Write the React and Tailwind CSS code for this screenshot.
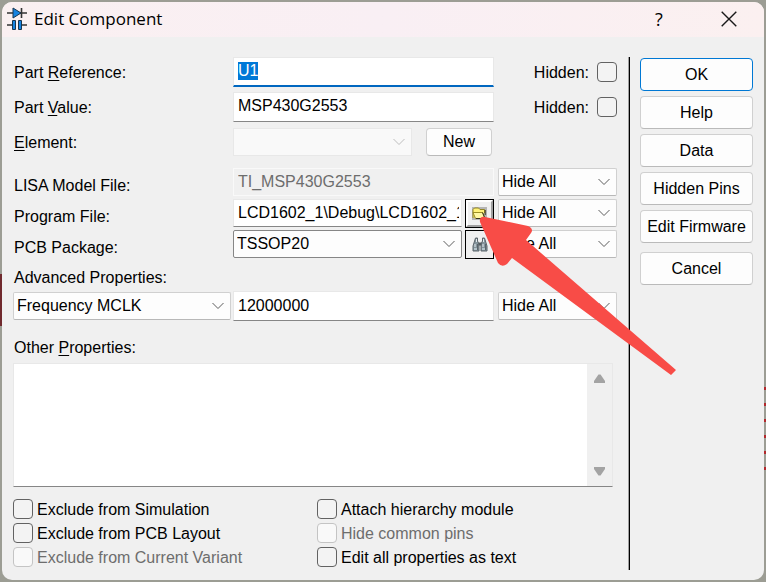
import { useEffect, useRef } from "react";

const Chevron = ({ className = "text-gray-600" }) => (
  <svg
    className={`pointer-events-none absolute right-[7px] top-2 h-3 w-3 ${className}`}
    viewBox="0 0 12 12"
    fill="none"
    stroke="currentColor"
  >
    <path d="M.5 3 6 8.500l5.500-5.500" />
  </svg>
);

const Select = ({ id, label, value, className = "", border = "border-[#d0d0d0] border-b-[#b8b8b8]", disabled }) => (
  <div className={`relative h-7 ${className}`}>
    <select
      id={id}
      aria-label={label}
      disabled={disabled}
      className={`h-7 w-full appearance-none border pl-[3px] pr-6 leading-5 outline-none ${border} ${
        disabled ? "bg-[#f9f9f9]" : "rounded-[2px] bg-[#fdfdfd]"
      }`}
    >
      <option>{value}</option>
    </select>
    <Chevron className={disabled ? "text-[#bdbdbd]" : "text-[#5c5c5c]"} />
  </div>
);

const Row = ({ id, label, labelClass = "pt-[2px] leading-6", children }) => (
  <div className="flex items-center">
    <label htmlFor={id} className={`w-[219px] shrink-0 ${labelClass}`}>
      {label}
    </label>
    {children}
  </div>
);

// File rows have their labels set towards the bottom edge
const FileRow = (props) => <Row labelClass="pt-2 leading-5" {...props} />;

const boxClass = (disabled) =>
  `h-5 w-5 shrink-0 appearance-none rounded-[4px] border ${
    disabled ? "border-[#c4c4c4] bg-[#f9f9f9]" : "border-[#626262] bg-[#f3f3f3]"
  }`;

const Hidden = ({ id }) => (
  <div className="ml-1 flex w-[119px] shrink-0 items-center justify-end gap-2">
    <label htmlFor={id} className="pt-[2px]">
      Hidden:
    </label>
    <input id={id} type="checkbox" className={boxClass(false)} />
  </div>
);

const Check = ({ label, disabled }) => (
  <label className={`flex h-6 items-center gap-1 ${disabled ? "text-[#6d6d6d]" : ""}`}>
    <input type="checkbox" disabled={disabled} className={boxClass(disabled)} />
    <span className="pt-[2px] leading-5">{label}</span>
  </label>
);

const SideButton = ({ children, className = "border-[#d0d0d0] border-b-[#bababa]" }) => (
  <button
    type="button"
    className={`h-[33px] w-full whitespace-nowrap rounded-[4px] border bg-[#fdfdfd] text-center ${className}`}
  >
    {children}
  </button>
);

const AppIcon = () => (
  <svg className="h-6 w-5" viewBox="0 0 20 24">
    <path d="M0 6h20M0 18h20" stroke="#333" strokeWidth="1.4" />
    <path d="M6 1v10l8-5z" fill="#1683e0" stroke="#18354f" />
    <path d="M14.5 1v10" stroke="#333" strokeWidth="1.6" />
    <path d="M8.5 17h3v2h-3z" fill="#f9f0f2" />
    <path d="M5.5 13.5h3v9h-3zM11.5 13.5h3v9h-3z" fill="#1683e0" stroke="#18354f" />
  </svg>
);

const FolderIcon = () => (
  <svg className="h-[13px] w-[15px]" viewBox="0 0 15 13">
    <path d="M0 0h15v13H0z" fill="#b5b5b5" />
    <path d="M1 11V2.5L2.5 1h4L8 2.5h4.5V6" fill="#fff27a" stroke="#918425" />
    <path d="M1 5.5h9.5l2.5 6H3.5z" fill="#fff8a4" stroke="#9b8e25" />
    <path d="M10.5 5.5 13 11.5H4M13.2 3v5" fill="none" stroke="#39351b" />
  </svg>
);

const BinocularsIcon = () => (
  <svg className="h-[15px] w-4" viewBox="0 0 16 15">
    <path d="M3.5 1h2v3L7 7v7H1V9zM12.5 1h-2v3L9 7v7h6V9z" fill="#84949c" stroke="#5b646a" />
    <path d="M6.5 5.5h3v3h-3z" fill="#555d61" />
    <path d="M4.5 2v3M3 7v3M11.5 2v3M11 7v3" stroke="#e1e9ed" />
    <path d="M2 11h4v2H2zM10 11h4v2h-4z" fill="#b4c4cb" />
    <path d="M5.5 7v6M13.5 7v6" stroke="#5b646a" />
  </svg>
);

const Pointer = () => (
  <svg
    className="pointer-events-none absolute left-0 top-0 z-10 h-[180px] w-[215px] max-w-none"
    viewBox="0 0 215 180"
  >
    <path
      d="M15 23Q14 17 20 18L63 27Q69 30 66 34L61 41 211 171 206 176 47 59 42 65Q37 69 33 64Z"
      fill="#f84c47"
    />
  </svg>
);

const editClass = "h-[30px] min-w-0 flex-1 border border-[#e8e8e8] bg-white px-1 leading-5 outline-none";

const App = () => {
  const reference = useRef(null);

  useEffect(() => {
    reference.current.focus();
    reference.current.select();
  }, []);

  return (
    <div className="relative min-h-screen bg-[#9c9d94] p-[2px] font-['Liberation_Sans',Arial,sans-serif] text-base text-black">
      {/* Schematic sheet behind the dialog */}
      <div className="absolute left-0 top-[274px] h-[52px] w-[2px] bg-[#702a2e]" />
      <div className="absolute right-0 top-[387px] h-[84px] w-[2px] bg-[repeating-linear-gradient(#b3282c_0_3px,#9c9d94_3px_16px)]" />

      <main className="relative flex min-h-[calc(100vh-4px)] flex-col overflow-hidden rounded-[10px] bg-[#f0f0f0]">
        {/* Title bar */}
        <header className="flex h-[35px] items-center bg-linear-to-r from-[#faf0f1] via-[#f9eff4] to-[#fbf0f0] pb-[2px] pl-[5px] pr-6">
          <AppIcon />
          <h1 className="ml-[7px] flex-1 font-['Open_Sans','Noto_Sans',sans-serif] text-[17px]">Edit Component</h1>
          <button type="button" aria-label="Help" className="w-6 font-['Open_Sans','Noto_Sans',sans-serif] text-lg">
            ?
          </button>
          <button type="button" aria-label="Close" className="ml-[47px] flex w-[22px] justify-center">
            <svg className="h-4 w-4" viewBox="0 0 16 16" stroke="#191919" strokeWidth="1.4">
              <path d="m.7.7 14.6 14.6m0-14.6L.7 15.3" />
            </svg>
          </button>
        </header>

        <form className="flex flex-1 px-[11px] pb-[10px] pt-5">
          <div className="flex min-w-0 flex-1 flex-col pb-px pl-px">
            <div className="flex flex-col gap-[5px]">
              <Row id="reference" label={<>Part <u className="underline-offset-2">R</u>eference:</>}>
                <input
                  id="reference"
                  ref={reference}
                  defaultValue="U1"
                  className={`${editClass} border-b-2 border-b-[#0067c0] pb-px selection:bg-[#0078d7] selection:text-white`}
                />
                <Hidden id="hide-reference" />
              </Row>
              <Row id="value" label={<>Part <u className="underline-offset-2">V</u>alue:</>}>
                <input id="value" defaultValue="MSP430G2553" className={`${editClass} border-b-[#868686] pb-[2px]`} />
                <Hidden id="hide-value" />
              </Row>
            </div>

            <div className="mt-[6px]">
              <Row id="element" label={<><u className="underline-offset-2">E</u>lement:</>}>
                <Select id="element" value="" disabled border="border-[#e8e8e8]" className="flex-1" />
                <button
                  type="button"
                  className="ml-[14px] mr-[125px] h-7 w-[66px] rounded-[4px] border border-[#d0d0d0] border-b-[#bababa] bg-[#fdfdfd]"
                >
                  New
                </button>
              </Row>
            </div>

            <div className="mt-3 flex flex-col gap-[3px]">
              <FileRow id="model" label="LISA Model File:">
                <input
                  id="model"
                  disabled
                  defaultValue="TI_MSP430G2553"
                  className="h-7 min-w-0 flex-1 border border-[#f9f9f9] bg-[#f0f0f0] px-1 leading-5 text-[#6d6d6d]"
                />
                <Select label="Model visibility" value="Hide All" className="ml-1 w-[119px]" />
              </FileRow>
              <FileRow id="program" label="Program File:">
                <input
                  id="program"
                  defaultValue="LCD1602_1\Debug\LCD1602_1\Debug.elf"
                  className="h-7 min-w-0 flex-1 border border-[#e8e8e8] border-b-[#868686] bg-white pl-1 pr-[2px] leading-5 outline-none"
                />
                <div className="relative ml-[3px] h-7 w-[29px]">
                  <button
                    type="button"
                    aria-label="Browse program file"
                    className="h-[29px] w-full border border-black bg-[#f0f0f0]"
                  >
                    <span className="flex h-full items-center justify-center border-2 border-b-[#a0a0a0] border-l-white border-r-[#a0a0a0] border-t-white">
                      <FolderIcon />
                    </span>
                  </button>
                  <Pointer />
                </div>
                <Select label="Program visibility" value="Hide All" className="ml-1 w-[119px]" />
              </FileRow>
              <FileRow id="package" label="PCB Package:">
                <Select id="package" value="TSSOP20" border="border-[#868686]" className="flex-1" />
                <div className="ml-[3px] h-7 w-[29px]">
                  <button
                    type="button"
                    aria-label="Find package"
                    className="flex h-[29px] w-full items-center justify-center border border-black bg-[#f0f0f0]"
                  >
                    <BinocularsIcon />
                  </button>
                </div>
                <Select label="Package visibility" value="Hide All" className="ml-1 w-[119px]" />
              </FileRow>
            </div>

            <label htmlFor="property" className="mt-2 leading-6">
              Advanced Properties:
            </label>
            <div className="mt-px flex items-center">
              <Select id="property" value="Frequency MCLK" className="-ml-px w-[218px]" />
              <input
                aria-label="Property value"
                defaultValue="12000000"
                className={`${editClass} ml-[2px] border-b-[#868686]`}
              />
              <Select label="Property visibility" value="Hide All" className="ml-1 w-[119px]" />
            </div>

            <label htmlFor="other" className="mt-[15px] leading-6">
              Other <u className="underline-offset-2">P</u>roperties:
            </label>
            <div className="-ml-px mr-1 mt-[3px] flex min-h-[124px] flex-1 border border-[#e8e8e8] border-b-[#868686] bg-white">
              <textarea id="other" className="min-w-0 flex-1 resize-none p-1 outline-none" />
              <div className="flex w-[25px] flex-col items-center justify-between bg-[#f0f0f0] py-[10px]">
                <svg className="h-[9px] w-[11px]" viewBox="0 0 11 9" fill="#a3a3a3">
                  <path d="M4.5.5h2L11 7v2H0V7z" />
                </svg>
                <svg className="h-[9px] w-[11px]" viewBox="0 0 11 9" fill="#a3a3a3">
                  <path d="M0 0h11v2L6.5 8.5h-2L0 2z" />
                </svg>
              </div>
            </div>

            <div className="-ml-px mt-[10px] flex">
              <div className="w-[304px]">
                <Check label="Exclude from Simulation" />
                <Check label="Exclude from PCB Layout" />
                <Check label="Exclude from Current Variant" disabled />
              </div>
              <div>
                <Check label="Attach hierarchy module" />
                <Check label="Hide common pins" disabled />
                <Check label="Edit all properties as text" />
              </div>
            </div>
          </div>

          <div className="ml-[11px] mr-[10px] w-[2px] border-l border-[#a0a0a0] bg-black" />

          <div className="flex w-[113px] shrink-0 flex-col gap-[5px] pt-px">
            <SideButton className="border-[#0078d4]">OK</SideButton>
            <SideButton>Help</SideButton>
            <SideButton>Data</SideButton>
            <SideButton>Hidden Pins</SideButton>
            <SideButton>Edit Firmware</SideButton>
            <div className="mt-1">
              <SideButton>Cancel</SideButton>
            </div>
          </div>
        </form>
      </main>
    </div>
  );
};

export default App;
